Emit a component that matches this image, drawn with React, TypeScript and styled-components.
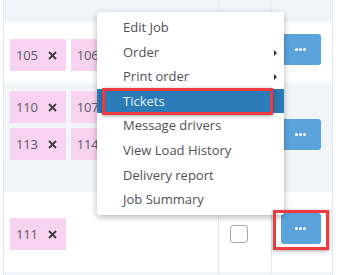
import React from "react";
import styled, { createGlobalStyle } from "styled-components";

const GlobalStyle = createGlobalStyle`
  body {
    margin: 0;
    background: #fff;
    font-family: "Open Sans", "Liberation Sans", sans-serif;
  }
`;

const Page = styled.div`
  position: relative;
  width: 343px;
  height: 275px;
  overflow: hidden;
`;

const Table = styled.div`
  margin-left: 3px;
  width: 328px;
  border-left: 1px solid #e3e7ed;
  border-right: 1px solid #e3e7ed;
`;

const Row = styled.div<{ $height: number; $bg: string }>`
  display: grid;
  grid-template-columns: 214px 53px 58px;
  height: ${(p) => p.$height}px;
  background: ${(p) => p.$bg};
`;

const TagCell = styled.div<{ $top: number }>`
  display: flex;
  flex-direction: column;
  gap: 5px;
  padding: ${(p) => p.$top}px 0 0 6px;
  overflow: hidden;
`;

const TagLine = styled.div`
  display: flex;
  gap: 5px;
`;

const CheckCell = styled.div`
  display: flex;
  align-items: center;
  padding: 4px 0 0 11px;
  border-left: 1px solid #e6e9ee;
`;

const ActionCell = styled.div`
  display: flex;
  align-items: center;
  justify-content: center;
  padding-bottom: 7px;
  border-left: 1px solid #e6e9ee;
`;

const Tag = styled.div`
  display: flex;
  align-items: center;
  flex-shrink: 0;
  height: 32px;
  padding: 0 9px 0 6px;
  gap: 10px;
  background: #f7d3f1;
  color: #5a5a6a;
  font-size: 13px;
  letter-spacing: -0.2px;
`;

const CloseIcon = () => (
  <svg width="9" height="9" viewBox="0 0 9 9">
    <path d="M1 1 L8 8 M8 1 L1 8" stroke="#3c3c3c" strokeWidth="1.8" />
  </svg>
);

const Checkbox = styled.div`
  width: 16px;
  height: 16px;
  border: 1px solid #a9a9a9;
  border-radius: 3px;
  background: #fff;
`;

const DotsButton = styled.div`
  width: 40px;
  height: 31px;
  border-radius: 3px;
  background: #5ba3dc;
  display: flex;
  align-items: center;
  justify-content: center;
  gap: 1px;
`;

const Dot = styled.span`
  width: 3px;
  height: 3px;
  border-radius: 50%;
  background: #fff;
`;

const Menu = styled.ul`
  position: absolute;
  left: 97px;
  top: 12px;
  width: 187px;
  margin: 0;
  padding: 3px 0;
  list-style: none;
  background: #fff;
  border-radius: 3px;
  box-shadow: 0 2px 6px rgba(0, 0, 0, 0.3);
`;

const MenuItem = styled.li<{ $active?: boolean }>`
  position: relative;
  height: 24.6px;
  line-height: 24.6px;
  padding-left: 26px;
  font-size: 13px;
  color: ${(p) => (p.$active ? "#e8f1f9" : "#505058")};
  background: ${(p) => (p.$active ? "#2b7bb7" : "transparent")};
`;

const SubArrow = styled.span`
  position: absolute;
  right: 7px;
  top: 10px;
  width: 0;
  height: 0;
  border-top: 3px solid transparent;
  border-bottom: 3px solid transparent;
  border-left: 3px solid #333;
`;

const Highlight = styled.div<{ $x: number; $y: number; $w: number; $h: number }>`
  position: absolute;
  left: ${(p) => p.$x}px;
  top: ${(p) => p.$y}px;
  width: ${(p) => p.$w}px;
  height: ${(p) => p.$h}px;
  box-sizing: border-box;
  border: 3px solid #ef3b3f;
  box-shadow: 0 1px 4px rgba(0, 0, 0, 0.35);
`;

const rows = [
  { height: 61, bg: "#fff", top: 17, lines: [["105", "106"]], check: false },
  { height: 109, bg: "#f2f5f9", top: 8, lines: [["110", "107"], ["113", "114"]], check: false },
  { height: 80, bg: "#fff", top: 26, lines: [["111"]], check: true },
];

const menuItems = [
  { label: "Edit Job" },
  { label: "Order", sub: true },
  { label: "Print order", sub: true },
  { label: "Tickets", active: true },
  { label: "Message drivers" },
  { label: "View Load History" },
  { label: "Delivery report" },
  { label: "Job Summary" },
];

export default function App() {
  return (
    <Page>
      <GlobalStyle />
      <Table>
        <Row $height={22} $bg="#f1f4f9">
          <div />
          <CheckCell />
          <ActionCell />
        </Row>
        {rows.map((r, i) => (
          <Row key={i} $height={r.height} $bg={r.bg}>
            <TagCell $top={r.top}>
              {r.lines.map((line, j) => (
                <TagLine key={j}>
                  {line.map((t) => (
                    <Tag key={t}>
                      {t}
                      <CloseIcon />
                    </Tag>
                  ))}
                </TagLine>
              ))}
            </TagCell>
            <CheckCell>{r.check && <Checkbox />}</CheckCell>
            <ActionCell>
              <DotsButton>
                <Dot />
                <Dot />
                <Dot />
              </DotsButton>
            </ActionCell>
          </Row>
        ))}
        <Row $height={10} $bg="#f1f4f9">
          <div />
          <CheckCell />
          <ActionCell />
        </Row>
      </Table>
      <Menu>
        {menuItems.map((m) => (
          <MenuItem key={m.label} $active={m.active}>
            {m.label}
            {m.sub && <SubArrow />}
          </MenuItem>
        ))}
      </Menu>
      <Highlight $x={102} $y={88} $w={171} $h={27} />
      <Highlight $x={273} $y={210} $w={56} $h={40} />
    </Page>
  );
}
